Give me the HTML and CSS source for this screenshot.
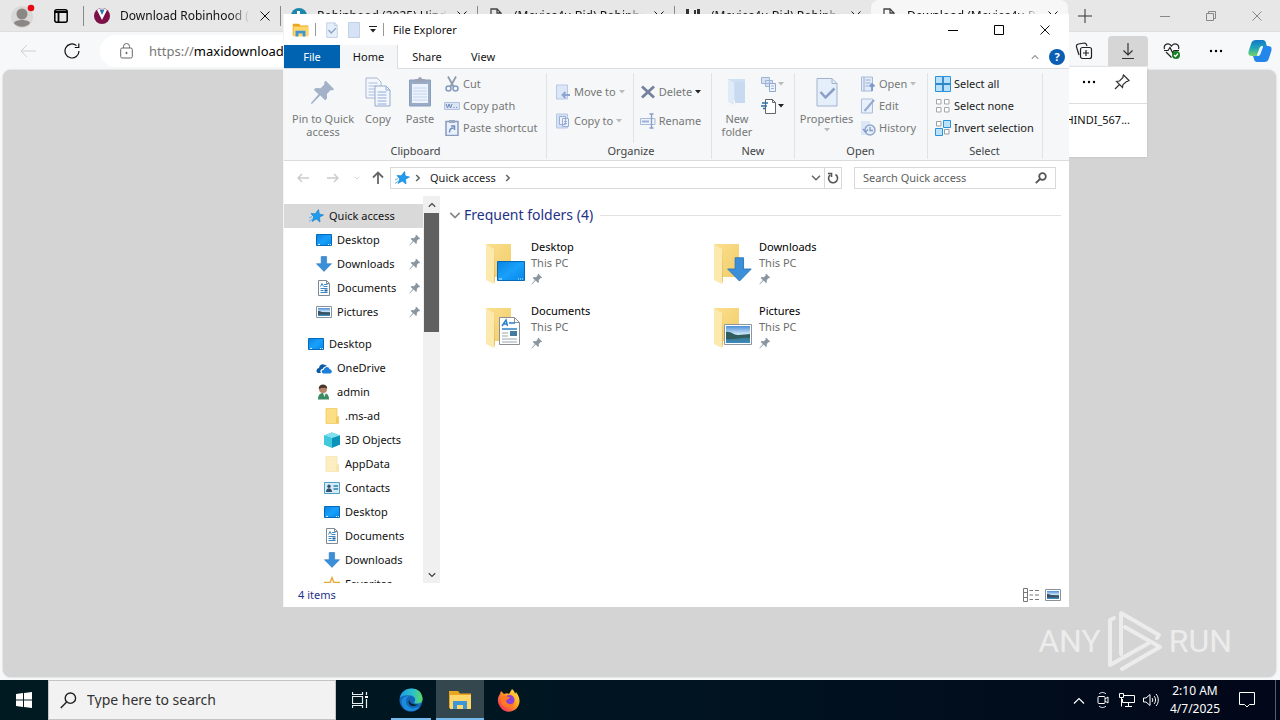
FILE: index.html
```html
<!DOCTYPE html>
<html lang="en">
<head>
  <meta charset="UTF-8" />
  <meta name="viewport" content="width=device-width, initial-scale=1.0"/>
  <title>File Explorer</title>
  <link rel="stylesheet" href="styles.css">
</head>
<body>
  <!-- shared icons -->
  <svg class="sprite" aria-hidden="true">
    <defs>
      <linearGradient id="gBlue" x1="0" y1="0" x2="1" y2="1"><stop offset="0" stop-color="#0a84e0"/><stop offset=".5" stop-color="#18a0fb"/><stop offset="1" stop-color="#0787e8"/></linearGradient>
      <linearGradient id="gSky" x1="0" y1="0" x2="0" y2="1"><stop offset="0" stop-color="#4c8fd8"/><stop offset=".5" stop-color="#d6ecfa"/><stop offset=".55" stop-color="#3f6f74"/><stop offset="1" stop-color="#3a8cc0"/></linearGradient>
      <linearGradient id="gFold" x1="0" y1="0" x2="1" y2="1"><stop offset="0" stop-color="#fbdf8d"/><stop offset="1" stop-color="#f1cd6b"/></linearGradient>
      <linearGradient id="gEdge" x1="0" y1="0" x2="1" y2="0"><stop offset="0" stop-color="#1b9de2"/><stop offset=".6" stop-color="#2fc2c8"/><stop offset="1" stop-color="#5fd95f"/></linearGradient>
      <linearGradient id="gFox" x1="1" y1="0" x2="0" y2="1"><stop offset="0" stop-color="#fff44f"/><stop offset=".45" stop-color="#ff9a1f"/><stop offset="1" stop-color="#f5156c"/></linearGradient>
      <linearGradient id="gCop" x1="0" y1="0" x2="0" y2="1"><stop offset="0" stop-color="#1577c9"/><stop offset=".5" stop-color="#1fa5b8"/><stop offset="1" stop-color="#74d36a"/></linearGradient>
    </defs>
    <symbol id="x" viewBox="0 0 10 10"><path d="M0.5 0.5l9 9M9.5 0.5l-9 9" fill="none" stroke="currentColor"/></symbol>
    <symbol id="caret" viewBox="0 0 6 4"><path d="M0 0h6L3 3.5z" fill="currentColor"/></symbol>
    <symbol id="chev-down" viewBox="0 0 10 6"><path d="M1 .8l4 4 4-4" fill="none" stroke="currentColor" stroke-width="1.5"/></symbol>
    <symbol id="chev-up" viewBox="0 0 10 6"><path d="M1 5.2l4-4 4 4" fill="none" stroke="currentColor" stroke-width="1.5"/></symbol>
    <symbol id="chev-right" viewBox="0 0 6 8"><path d="M1.2 1l3 3-3 3" fill="none" stroke="currentColor" stroke-width="1.6"/></symbol>
    <symbol id="page" viewBox="0 0 14 16"><path d="M2 1h6l4 4v10H2zM8 1v4h4" fill="none" stroke="#444" stroke-width="1.3"/></symbol>
    <symbol id="pin" viewBox="0 0 12 12"><path d="M7.3 0.8l3.9 3.9-1 .6-.6-.2-1.8 1.8.1 2.1-.9.9-2.3-2.3L.8 11.6l-.5-.4 3.600-4.100L1.700 5l.9-.9 2.300.1 1.800-1.800-.2-.8z" fill="currentColor"/></symbol>
    <symbol id="star" viewBox="0 0 16 16"><path d="M10.500 1.500l.8 4.500 4.200 1-4 2.300.5 4.700-3.700-3-4.300 2.500 1.800-4.600L3 5.500l4.300.3z" fill="#1f9bef" stroke="#0d78c8" stroke-width=".6"/><path d="M1 13.500l3.500-2.500M1 10l3-1.500" stroke="#5bb4f0"/></symbol>
    <symbol id="desktop" viewBox="0 0 16 16"><path d="M.5 2.500h15v11H.5z" fill="url(#gBlue)" stroke="#0669b8"/><path d="M2 12.500h2M12 12.500h1M14 12.500h1" stroke="#d8efff"/></symbol>
    <symbol id="down" viewBox="0 0 16 16"><path d="M5.200 0.500h5.400v7.200h4.900L8 15.400.4 7.700h4.800z" fill="#3b8fd9" stroke="#2c78bd" stroke-width=".6"/></symbol>
    <symbol id="doc" viewBox="0 0 16 16"><path d="M2.500.500h8l3 3v12h-11z" fill="#fff" stroke="#7f8a92"/><path d="M10.500.500v3h3" fill="none" stroke="#7f8a92"/><path d="M4.500 6.500l1.500-3 1.500 3M8 4.500h3.500M8 6.500h3.500M4.500 8.500h7M4.500 10.500h3M4.500 12.500h7" fill="none" stroke="#3b87c8"/><path d="M8.500 10.500h3" stroke="#1f5f9e" stroke-width="2"/></symbol>
    <symbol id="pic" viewBox="0 0 16 16"><path d="M.5 2.500h15v11H.5z" fill="#fff" stroke="#8a9299"/><path d="M2 4h12v8H2z" fill="url(#gSky)"/><path d="M2 7c3 0 5 2 12 2v1.500H2z" fill="#3b4f64"/></symbol>
    <symbol id="cloud" viewBox="0 0 16 16"><path d="M1 12.500C-.5 10 1.500 8 3 8c.3-3 3.500-5 6-3 1 .2 2 1 2 1-3 .2-4 2-4.500 3C4 9 4 12 5 13H2z" fill="#0c59a4"/><path d="M7 13.500c-2-1-1.500-3.800.8-3.800C8.500 6.500 13 6 13.500 9.300c3 .3 3 4 .5 4.200z" fill="#1a7fdb"/></symbol>
    <symbol id="user" viewBox="0 0 16 16"><circle cx="7" cy="5" r="4" fill="#b98468"/><path d="M2.800 5C2-1 11.500-1 11.200 4.500c-2-1-5-1-8.400.5z" fill="#4a372e"/><path d="M2 15.500c0-4 1.500-6.500 5.500-6.500s5.500 2.500 5.500 6.500z" fill="#3c8a62"/><path d="M7 9l1.500 4L10 9z" fill="#eee"/></symbol>
    <symbol id="folder" viewBox="0 0 16 16"><path d="M2 .5h11v8h1.500v7H2z" fill="#fcdf84" stroke="#eec35a" stroke-width=".7"/><path d="M12 9h2.500v6.300H12z" fill="#f3cb5c"/></symbol>
    <symbol id="cube" viewBox="0 0 16 16"><path d="M8 .5l8 3v9l-8 3.200-8-3.200v-9z" fill="#22b1cf"/><path d="M8 .5l8 3-8 2.800-8-2.800z" fill="#7fe0ee"/><path d="M8 6.300v9.400l-8-3.200v-9z" fill="#41c8dd"/><path d="M8 6.300l8-2.800v9l-8 3.200z" fill="#0c93b8"/></symbol>
    <symbol id="contact" viewBox="0 0 16 16"><path d="M.5 2.500h15v11H.5z" fill="#d5ecf6" stroke="#4ba2c6"/><circle cx="5" cy="6.300" r="1.700" fill="#34516b"/><path d="M2 12c0-5 6-5 6 0z" fill="#34516b"/><path d="M9.500 6h4.500M9.500 9h4.500" stroke="#2f7ba8" stroke-width="1.300"/></symbol>
    <symbol id="fav" viewBox="0 0 16 16"><path d="M8 1.500l2 5h5.500l-4.500 3 2 5.500-5-3.500L3 15l2-5.500-4.500-3H6z" fill="#fff3cf" stroke="#e5a93c" stroke-width="1.300"/></symbol>
    <symbol id="bigfolder" viewBox="0 0 40 48"><path d="M1 4h25v33H1z" fill="url(#gFold)"/><path d="M1 4l8 5v35L1 40z" fill="#fce9ae"/><path d="M9 9l1 31-1 4z" fill="#e5be61"/></symbol>
    <symbol id="explorer" viewBox="0 0 24 22"><path d="M1 2h9l2 2.500h11V19H1z" fill="#eaa620"/><path d="M2 6h21v14H2z" fill="#ffd669"/><path d="M5 20v-8h14v8h-4v-4H9v4z" fill="#3f96d4"/></symbol>
    <symbol id="loupe" viewBox="0 0 18 18"><circle cx="11" cy="6.500" r="5.500" fill="none" stroke="currentColor" stroke-width="1.500"/><path d="M7 10.500L.8 17" stroke="currentColor" stroke-width="1.500"/></symbol>
    <symbol id="copypage" viewBox="0 0 26 30"><path d="M1 1h11l4 4v16H1z" fill="#f4f7fc" stroke="#a9b8d0"/><path d="M3.500 6h9M3.500 9h9M3.500 12h9M3.500 15h9M3.500 18h9" stroke="#a9bde0"/><path d="M10 9h11l4 4v16H10z" fill="#f4f7fc" stroke="#94a9cb"/><path d="M21 9v4h4M12.500 15h9M12.500 18h9M12.500 21h9M12.500 24h9M12.500 27h9" stroke="#8fabd9" fill="none"/></symbol>
    <symbol id="clip" viewBox="0 0 24 30"><path d="M1.500 3h21v26h-21z" fill="#9aabc8" stroke="#899dbc"/><path d="M4 7h16v19H4z" fill="#edf3fc"/><path d="M7 5V2h3c0-2.500 4-2.500 4 0h3v3z" fill="#9aa4b4"/><path d="M5 11h14M5 14h14M5 17h14M5 20h14M5 23h14" stroke="#c4d4ee"/></symbol>
    <symbol id="cut" viewBox="0 0 16 16"><path d="M4 .5l5.500 10M12 .5l-5.500 10" stroke="#8f9cac" stroke-width="1.800"/><circle cx="4.500" cy="12.500" r="2.500" fill="none" stroke="#859bc2" stroke-width="1.500"/><circle cx="11.500" cy="12.500" r="2.500" fill="none" stroke="#859bc2" stroke-width="1.500"/></symbol>
    <symbol id="path" viewBox="0 0 16 16"><path d="M.5 4.500h15v7H.5z" fill="#d9e4f5" stroke="#b2c3de"/><path d="M2 6l1.500 4L5 6l1.500 4L8 6M9.500 9.500h1M12 9.500h1" fill="none" stroke="#7088b4"/></symbol>
    <symbol id="shortcut" viewBox="0 0 16 16"><path d="M2 1.500h12v14H2z" fill="#eaf1fb" stroke="#879bc0" stroke-width="1.500"/><path d="M5 0h6v3H5z" fill="#9aa9c0"/><path d="M5.500 12.500c0-3 1-4.500 4-4.500M7 6h3.500v4" fill="none" stroke="#6f8cc0" stroke-width="1.500"/></symbol>
    <symbol id="moveto" viewBox="0 0 16 16"><path d="M1.500 1h11v14h-11z" fill="#dce6f6" stroke="#b7c8e4"/><path d="M15 11H8M10.500 8L7.500 11l3 3" fill="none" stroke="#8ca4d0" stroke-width="1.800"/></symbol>
    <symbol id="copyto" viewBox="0 0 16 16"><path d="M1.500 1h11v14h-11z" fill="#d5e1f5" stroke="#b7c8e4"/><path d="M4.500 3.500h6v8h-6zM7.500 5.500h6v8h-6z" fill="#eef3fb" stroke="#98add3"/><path d="M9 8.500h3M9 10.500h3" stroke="#98add3"/></symbol>
    <symbol id="delete" viewBox="0 0 16 16"><path d="M2 2.500l12 11M14 2.500l-12 11" stroke="#74839b" stroke-width="2.800"/></symbol>
    <symbol id="rename" viewBox="0 0 16 16"><path d="M.5 5.500h14.500v6H.5z" fill="#eef3fb" stroke="#a9bbdb"/><path d="M2 7.500h7v2H2z" fill="#9db1d8"/><path d="M9.500 1h4M9.500 15h4M11.500 1v14" stroke="#879dc5" stroke-width="1.300"/></symbol>
    <symbol id="newfolder" viewBox="0 0 24 30"><path d="M3 2h17v21H3z" fill="#cfe0f2"/><path d="M3 2l6 4v22l-6-3z" fill="#e0ebf8"/><path d="M10 5h10v21H10z" fill="#c7daef"/></symbol>
    <symbol id="newitem" viewBox="0 0 16 16"><path d="M.5 1.500h8v6h-8zM4.500 4.500h7v6h-7z" fill="#d5e2f6" stroke="#a0b3d5"/><path d="M8.500 7.500h6v8h-6z" fill="#eef3fb" stroke="#90a7d0"/><path d="M10 10h3M10 12.500h3" stroke="#a0b3d5"/></symbol>
    <symbol id="easy" viewBox="0 0 16 16"><path d="M4.500 1.500h7l3 3v11h-10z" fill="#fff" stroke="#666"/><path d="M11.500 1.500v3h3" fill="none" stroke="#666"/><path d="M1 5h6M0 8h6M2 10.500h3" stroke="#2d6fa9" stroke-width="1.300"/></symbol>
    <symbol id="props" viewBox="0 0 22 30"><path d="M1 1.500h15l5 5V29H1z" fill="#e5eefb" stroke="#a4b3cd"/><path d="M16 1.500v5h5" fill="none" stroke="#a4b3cd"/><path d="M4.500 15l5 5.500 9-9" fill="none" stroke="#8b9fc5" stroke-width="2.500"/></symbol>
    <symbol id="open" viewBox="0 0 16 16"><path d="M1.500 1h11v14h-11z" fill="#e2ebf8" stroke="#a9bad8"/><path d="M4 1v14M5.500 4h5M5.500 7h5M5.500 10h3" stroke="#9aaed3"/><path d="M12 15V8M9.500 10.500L12 8l2.500 2.500" fill="none" stroke="#7f98c9" stroke-width="1.800"/></symbol>
    <symbol id="edit" viewBox="0 0 16 16"><path d="M1.500 1h11v14h-11z" fill="#e8f0fb" stroke="#adbeda"/><path d="M4.500 13l9.500-11" stroke="#94a8d0" stroke-width="2"/></symbol>
    <symbol id="history" viewBox="0 0 16 16"><path d="M1 1h9v14H1z" fill="#dce7f6"/><circle cx="10" cy="10" r="5" fill="#e5edf9" stroke="#92a7cf" stroke-width="1.500"/><path d="M10 7v3.500h3M3 9l2.500 3L8 9.500" fill="none" stroke="#8199c7" stroke-width="1.300"/></symbol>
    <symbol id="selall" viewBox="0 0 16 16"><path d="M.5.500h15v15H.5z" fill="#b7e0fb" stroke="#2e93d6"/><path d="M8 1v14M1 8h14" stroke="#2e86c6" stroke-width="1.800"/></symbol>
    <symbol id="selnone" viewBox="0 0 16 16"><path d="M1.500 1.500h4.500V6H1.500zM9.500 1.500H14V6H9.500zM1.500 9.500h4.500V14H1.500zM9.500 9.500H14V14H9.500z" fill="#fff" stroke="#a3a7ab"/></symbol>
    <symbol id="selinv" viewBox="0 0 16 16"><path d="M1.500 1.500h4.500V6H1.500zM9.500 9.500H14V14H9.500z" fill="#fff" stroke="#999da1"/><path d="M8.500.500h7v7h-7zM.5 8.500h7v7h-7z" fill="#b9e2fc" stroke="#2e93d6"/></symbol>
    <symbol id="dots" viewBox="0 0 14 4"><circle cx="2" cy="2" r="1.200"/><circle cx="7" cy="2" r="1.200"/><circle cx="12" cy="2" r="1.200"/></symbol>
  </svg>

  <main class="screen">
    <section class="browser" aria-label="Browser">
      <div class="tabstrip">
        <button class="profile" aria-label="Profile">
          <svg width="26" height="26" viewBox="0 0 26 26"><circle cx="12" cy="14" r="11" fill="#d8d8d8"/><circle cx="12" cy="11" r="5.500" fill="#8b8785"/><path d="M4 20c1-4 15-4 16 0-3 5-13 5-16 0z" fill="#8b8785"/><circle cx="21" cy="5" r="3.300" fill="#e50914"/></svg>
        </button>
        <button class="tab-menu" aria-label="Tab actions">
          <svg width="14" height="14" viewBox="0 0 14 14"><rect x=".8" y=".8" width="12.400" height="12.400" rx="2" fill="none" stroke="#000" stroke-width="1.500"/><path d="M1 3h12M4.500 3v10" stroke="#000" stroke-width="1.800"/></svg>
        </button>
        <div class="tab">
          <svg width="16" height="16" viewBox="0 0 16 16"><circle cx="8" cy="8" r="8" fill="#7b1146"/><path d="M3 2l5 10 5-10c-3-2.500-7-2.500-10 0z" fill="#fff"/><path d="M5.500 1.500h5L8 7z" fill="#257ca8"/></svg>
          <span class="tab-text">Download Robinhood (2025)</span>
          <button aria-label="Close tab"><svg width="10" height="10"><use href="#x"/></svg></button>
        </div>
        <div class="tab">
          <svg width="16" height="16" viewBox="0 0 16 16"><circle cx="8" cy="8" r="8" fill="#1c87ad"/><path d="M6 3h3v8H6z" fill="#fff"/></svg>
          <span class="tab-text">Robinhood (2025) Hindi Mov</span>
          <button aria-label="Close tab"><svg width="10" height="10"><use href="#x"/></svg></button>
        </div>
        <div class="tab">
          <svg width="16" height="16"><use href="#page"/></svg>
          <span class="tab-text">(Movies4u.Bid).Robinhood</span>
          <button aria-label="Close tab"><svg width="10" height="10"><use href="#x"/></svg></button>
        </div>
        <div class="tab">
          <svg width="16" height="16" viewBox="0 0 16 16"><path d="M1 1h14v14H1z" fill="#333"/><path d="M4 1h8v6H4z" fill="#eee"/><path d="M9 2h2v4H9z" fill="#333"/></svg>
          <span class="tab-text">(Movies4u.Bid).Robinhood</span>
          <button aria-label="Close tab"><svg width="10" height="10"><use href="#x"/></svg></button>
        </div>
        <div class="tab active">
          <svg width="16" height="16"><use href="#page"/></svg>
          <span class="tab-text">Download (Movies4u.Bid)</span>
          <button aria-label="Close tab"><svg width="10" height="10"><use href="#x"/></svg></button>
        </div>
        <button class="new-tab" aria-label="New tab"><svg width="14" height="14"><path d="M7 0v14M0 7h14" stroke="#333"/></svg></button>
        <div class="browser-controls">
          <button aria-label="Minimize"><svg width="10" height="10"><path d="M0 5.500h10" stroke="#888"/></svg></button>
          <button aria-label="Restore"><svg width="10" height="10" fill="none" stroke="#888"><path d="M.5 2.500h7v7h-7zM2.500 2V.500h7v7H8"/></svg></button>
          <button aria-label="Close"><svg width="10" height="10"><use href="#x"/></svg></button>
        </div>
      </div>
      <div class="toolbar">
        <button class="back" aria-label="Back"><svg width="16" height="14" fill="none" stroke="#d0d0d0"><path d="M16 7H1M7 1L1 7l6 6"/></svg></button>
        <button class="reload" aria-label="Reload"><svg width="16" height="16" viewBox="0 0 16 16" fill="none" stroke="#111" stroke-width="1.200"><path d="M15 8a7 7 0 1 1-2.500-5.400M14.800.5v4h-4"/></svg></button>
        <label class="url">
          <svg width="13" height="16" viewBox="0 0 13 16" fill="none" stroke="#666"><rect x=".7" y="5" width="11.600" height="10" rx="1.500"/><path d="M3.500 5V3.500a3 3 0 0 1 6 0V5"/><circle cx="6.500" cy="10" r=".7" fill="#444"/></svg>
          <span>https://</span><input type="text" value="maxidownload" aria-label="Address">
        </label>
        <div class="toolbar-icons">
          <button aria-label="Collections"><svg width="18" height="18" viewBox="0 0 18 18" fill="none" stroke="#222" stroke-width="1.200"><path d="M4 13L1.500 5c-.5-2 0-2.500 2-3l6-1c1.500 0 2 1 2.500 3"/><rect x="5.500" y="5.500" width="11" height="11" rx="2"/><path d="M11 8v6M8 11h6"/></svg></button>
          <button class="pressed" aria-label="Downloads"><svg width="14" height="18" viewBox="0 0 14 18" fill="none" stroke="#333" stroke-width="1.200"><path d="M7 1v12M2.500 8.500L7 13l4.500-4.500M1 16.500h12"/></svg></button>
          <button aria-label="Browser essentials"><svg width="18" height="18" viewBox="0 0 18 18" fill="none" stroke="#222" stroke-width="1.200"><path d="M1.500 7C0 2 6 0 8.500 4 11 0 17 2 15.500 7M3 10l5.500 5.500M1 8.500h4l2-3 2.500 5L11 8.500h5"/><circle cx="13" cy="13" r="4" fill="#158021" stroke="none"/><path d="M11 13l1.500 1.500L15 11.500" stroke="#fff"/></svg></button>
          <button aria-label="Settings"><svg width="14" height="4"><use href="#dots"/></svg></button>
          <button aria-label="Copilot"><svg width="24" height="24" viewBox="0 0 24 24"><path d="M8 1h7c3 0 3 4 4 6h-5c-2 0-2 2-3 5l-2 5H4c-4 0-4-3-3-6l2-6c1-3 2-4 5-4z" fill="url(#gCop)"/><path d="M16 23H9c-3 0-3-4-4-6h5c2 0 2-2 3-5l2-5h5c4 0 4 3 3 6l-2 6c-1 3-2 4-5 4z" fill="#2386ea"/><path d="M12 8h3l-3 8H9z" fill="#eef7ff"/></svg></button>
        </div>
      </div>
      <div class="viewport"></div>
    </section>

    <aside class="downloads" aria-label="Downloads">
      <div class="downloads-head">
        <button aria-label="More"><svg width="14" height="4"><use href="#dots"/></svg></button>
        <button aria-label="Pin"><svg width="16" height="16" viewBox="0 0 16 16" fill="none" stroke="#333" stroke-width="1.200"><path d="M9.500 1l5.500 5.500-1.500 1-1 0L9 10.500l-.5 3L2.500 7.500l3-.5L9 3.500V2zM5.500 10.500L1 15"/></svg></button>
      </div>
      <p class="download-name">HINDI_567...</p>
    </aside>

    <section class="explorer" aria-label="File Explorer">
      <header class="titlebar">
        <svg width="17" height="16"><use href="#explorer"/></svg>
        <i class="bar"></i>
        <button aria-label="Properties"><svg width="12" height="16"><use href="#props"/></svg></button>
        <button aria-label="New folder"><svg width="12" height="16" viewBox="0 0 12 16"><path d="M.5.500h11v15H.5z" fill="#d6e3f5" stroke="#c1d0e6"/></svg></button>
        <button class="customize" aria-label="Customize"><svg width="8" height="7" viewBox="0 0 8 7"><path d="M0 .5h8" stroke="#222"/><path d="M1 3h6L4 6.500z" fill="#222"/></svg></button>
        <i class="bar"></i>
        <h1>File Explorer</h1>
        <div class="win-controls">
          <button aria-label="Minimize"><svg width="10" height="10"><path d="M0 5.500h10" stroke="#000"/></svg></button>
          <button aria-label="Maximize"><svg width="10" height="10"><path d="M.5.500h9v9h-9z" fill="none" stroke="#000"/></svg></button>
          <button aria-label="Close"><svg width="10" height="10"><use href="#x"/></svg></button>
        </div>
      </header>

      <nav class="ribbon-tabs">
        <button class="file">File</button>
        <button class="current">Home</button>
        <button>Share</button>
        <button>View</button>
        <div class="ribbon-help">
          <button aria-label="Collapse ribbon"><svg width="8" height="6" viewBox="0 0 10 6"><use href="#chev-up"/></svg></button>
          <button class="help" aria-label="Help">?</button>
        </div>
      </nav>

      <div class="ribbon">
        <div class="group clipboard">
          <div class="group-body">
            <button class="big wide"><svg width="26" height="30" viewBox="0 0 12 14"><path transform="translate(0 1)" d="M7.300.8l3.900 3.900-1 .6-.6-.2-1.800 1.800.1 2.100-.9.900-2.300-2.300L.8 11.600l-.5-.4 3.600-4.100L1.700 5l.9-.9 2.300.1 1.800-1.800-.2-.8z" fill="#a3b2c9"/></svg>Pin to Quick access</button>
            <button class="big"><svg width="26" height="30"><use href="#copypage"/></svg>Copy</button>
            <button class="big"><svg width="24" height="30"><use href="#clip"/></svg>Paste</button>
            <div class="stack">
              <button><svg width="16" height="16"><use href="#cut"/></svg>Cut</button>
              <button><svg width="16" height="16"><use href="#path"/></svg>Copy path</button>
              <button><svg width="16" height="16"><use href="#shortcut"/></svg>Paste shortcut</button>
            </div>
          </div>
          <span class="group-name">Clipboard</span>
        </div>
        <div class="group organize">
          <div class="group-body">
            <div class="stack loose">
              <button><svg width="16" height="16"><use href="#moveto"/></svg>Move to<svg class="caret" width="6" height="4"><use href="#caret"/></svg></button>
              <button><svg width="16" height="16"><use href="#copyto"/></svg>Copy to<svg class="caret" width="6" height="4"><use href="#caret"/></svg></button>
            </div>
            <div class="stack loose divided">
              <button><svg width="16" height="16"><use href="#delete"/></svg>Delete<svg class="caret dark" width="6" height="4"><use href="#caret"/></svg></button>
              <button><svg width="16" height="16"><use href="#rename"/></svg>Rename</button>
            </div>
          </div>
          <span class="group-name">Organize</span>
        </div>
        <div class="group new">
          <div class="group-body">
            <button class="big"><svg width="24" height="30"><use href="#newfolder"/></svg>New folder</button>
            <div class="stack">
              <button aria-label="New item"><svg width="16" height="16"><use href="#newitem"/></svg><svg class="caret" width="6" height="4"><use href="#caret"/></svg></button>
              <button aria-label="Easy access"><svg width="16" height="16"><use href="#easy"/></svg><svg class="caret dark" width="6" height="4"><use href="#caret"/></svg></button>
            </div>
          </div>
          <span class="group-name">New</span>
        </div>
        <div class="group open">
          <div class="group-body">
            <button class="big"><svg width="22" height="30"><use href="#props"/></svg>Properties<svg class="caret" width="6" height="4"><use href="#caret"/></svg></button>
            <div class="stack">
              <button><svg width="16" height="16"><use href="#open"/></svg>Open<svg class="caret" width="6" height="4"><use href="#caret"/></svg></button>
              <button><svg width="16" height="16"><use href="#edit"/></svg>Edit</button>
              <button><svg width="16" height="16"><use href="#history"/></svg>History</button>
            </div>
          </div>
          <span class="group-name">Open</span>
        </div>
        <div class="group select">
          <div class="group-body">
            <div class="stack enabled">
              <button><svg width="16" height="16"><use href="#selall"/></svg>Select all</button>
              <button><svg width="16" height="16"><use href="#selnone"/></svg>Select none</button>
              <button><svg width="16" height="16"><use href="#selinv"/></svg>Invert selection</button>
            </div>
          </div>
          <span class="group-name">Select</span>
        </div>
      </div>

      <div class="navbar">
        <div class="nav-buttons">
          <button class="dim" aria-label="Back"><svg width="12" height="10" fill="none" stroke="currentColor" stroke-width="1.500"><path d="M12 5H1M5 1L1 5l4 4"/></svg></button>
          <button class="dim" aria-label="Forward"><svg width="12" height="10" fill="none" stroke="currentColor" stroke-width="1.500"><path d="M0 5h11M7 1l4 4-4 4"/></svg></button>
          <button class="dim recent" aria-label="Recent locations"><svg width="6" height="4" viewBox="0 0 10 6"><use href="#chev-down"/></svg></button>
          <button aria-label="Up"><svg width="12" height="13" fill="none" stroke="currentColor" stroke-width="1.800"><path d="M6 13V1.500M1 6.500l5-5 5 5"/></svg></button>
        </div>
        <div class="address">
          <svg width="16" height="16"><use href="#star"/></svg>
          <svg width="6" height="8"><use href="#chev-right"/></svg>
          <button>Quick access</button>
          <svg width="6" height="8"><use href="#chev-right"/></svg>
          <button class="history-drop" aria-label="Previous locations"><svg width="10" height="6"><use href="#chev-down"/></svg></button>
          <button class="refresh" aria-label="Refresh"><svg width="12" height="12" viewBox="0 0 12 12" fill="none" stroke="#555" stroke-width="1.600"><path d="M8.500 2.500A4.500 4.500 0 1 1 3 3M1 1.500h3.500V5"/></svg></button>
        </div>
        <label class="search">
          <input type="text" placeholder="Search Quick access" aria-label="Search Quick access">
          <svg width="12" height="12" viewBox="0 0 12 12" fill="none" stroke="#555" stroke-width="1.800"><circle cx="7.500" cy="4.500" r="3.300"/><path d="M5 7L.8 11.200"/></svg>
        </label>
      </div>

      <div class="panes">
        <nav class="tree">
          <a href="#" class="level-0 selected"><svg width="16" height="16"><use href="#star"/></svg>Quick access</a>
          <a href="#" class="level-1"><svg width="16" height="16"><use href="#desktop"/></svg>Desktop<svg class="pin" width="12" height="12"><use href="#pin"/></svg></a>
          <a href="#" class="level-1"><svg width="16" height="16"><use href="#down"/></svg>Downloads<svg class="pin" width="12" height="12"><use href="#pin"/></svg></a>
          <a href="#" class="level-1"><svg width="16" height="16"><use href="#doc"/></svg>Documents<svg class="pin" width="12" height="12"><use href="#pin"/></svg></a>
          <a href="#" class="level-1"><svg width="16" height="16"><use href="#pic"/></svg>Pictures<svg class="pin" width="12" height="12"><use href="#pin"/></svg></a>
          <a href="#" class="level-0 root"><svg width="16" height="16"><use href="#desktop"/></svg>Desktop</a>
          <a href="#" class="level-1"><svg width="16" height="16"><use href="#cloud"/></svg>OneDrive</a>
          <a href="#" class="level-1"><svg width="16" height="16"><use href="#user"/></svg>admin</a>
          <a href="#" class="level-2"><svg width="16" height="16"><use href="#folder"/></svg>.ms-ad</a>
          <a href="#" class="level-2"><svg width="16" height="16"><use href="#cube"/></svg>3D Objects</a>
          <a href="#" class="level-2"><svg class="faded" width="16" height="16"><use href="#folder"/></svg>AppData</a>
          <a href="#" class="level-2"><svg width="16" height="16"><use href="#contact"/></svg>Contacts</a>
          <a href="#" class="level-2"><svg width="16" height="16"><use href="#desktop"/></svg>Desktop</a>
          <a href="#" class="level-2"><svg width="16" height="16"><use href="#doc"/></svg>Documents</a>
          <a href="#" class="level-2"><svg width="16" height="16"><use href="#down"/></svg>Downloads</a>
          <a href="#" class="level-2"><svg width="16" height="16"><use href="#fav"/></svg>Favorites</a>
        </nav>
        <div class="scrollbar">
          <button aria-label="Scroll up"><svg width="8" height="6" viewBox="0 0 10 6"><use href="#chev-up"/></svg></button>
          <div class="thumb"></div>
          <button aria-label="Scroll down"><svg width="8" height="6" viewBox="0 0 10 6"><use href="#chev-down"/></svg></button>
        </div>
        <div class="content">
          <h2><svg width="12" height="7" viewBox="0 0 10 6"><use href="#chev-down"/></svg>Frequent folders (4)</h2>
          <div class="folders">
            <a href="#" class="folder">
              <svg width="40" height="48" viewBox="0 0 40 48"><use href="#bigfolder" width="40" height="48"/><path d="M12.500 21.500h27v19h-27z" fill="url(#gBlue)" stroke="#0669b8"/><path d="M14 39h3M33 39h1M35 39h1M37 39h1" stroke="#d8efff"/></svg>
              <span><b>Desktop</b>This PC<svg width="12" height="12"><use href="#pin"/></svg></span>
            </a>
            <a href="#" class="folder">
              <svg width="40" height="48" viewBox="0 0 40 48"><use href="#bigfolder" width="40" height="48"/><use href="#down" x="14" y="17" width="25" height="25"/></svg>
              <span><b>Downloads</b>This PC<svg width="12" height="12"><use href="#pin"/></svg></span>
            </a>
            <a href="#" class="folder">
              <svg width="40" height="48" viewBox="0 0 40 48"><use href="#bigfolder" width="40" height="48"/><path d="M14.500 13.500h15l5 5v22h-20z" fill="#fff" stroke="#8a8f94"/><path d="M29.500 13.500v5h5" fill="none" stroke="#8a8f94"/><path d="M17 22l4-6 1.500 6M18.500 20h3M24 19h6M17 25h15" fill="none" stroke="#2b80ca" stroke-width="1.500"/><path d="M17 29h6M17 32h6M17 35h15M17 38h15" stroke="#9aa4ac"/><path d="M25 27h7v5h-7z" fill="#46799e"/></svg>
              <span><b>Documents</b>This PC<svg width="12" height="12"><use href="#pin"/></svg></span>
            </a>
            <a href="#" class="folder">
              <svg width="40" height="48" viewBox="0 0 40 48"><use href="#bigfolder" width="40" height="48"/><path d="M11.500 20.500h27v20h-27z" fill="#fff" stroke="#8e969d"/><path d="M13 22h24v17H13z" fill="url(#gSky)"/><path d="M13 28c5-1 7 3 12 3l12-1v4c-8-1-16 2-24 1z" fill="#315d5e"/></svg>
              <span><b>Pictures</b>This PC<svg width="12" height="12"><use href="#pin"/></svg></span>
            </a>
          </div>
        </div>
      </div>

      <footer class="status">
        <span>4 items</span>
        <button aria-label="Details view"><svg width="16" height="14" viewBox="0 0 16 14" fill="none" stroke="#777"><path d="M.5.500h4v13h-4zM1 4.500h3M1 9.500h3M6.500 2.500H10M12 2.500h4M6.500 7H10M12 7h4M6.500 11.500H10M12 11.500h4"/></svg></button>
        <button aria-label="Large icons view"><svg width="16" height="16"><use href="#pic"/></svg></button>
      </footer>
    </section>

    <div class="watermark">
      <span>ANY</span>
      <svg width="56" height="62" viewBox="0 0 56 62" fill="none" stroke="#ececec" stroke-width="4" stroke-linejoin="round" stroke-linecap="round"><path d="M7 8L3 10v45l39-22M14 44V3l38 22-2 3M18 17l35 20-38 22"/></svg>
      <span>RUN</span>
    </div>

    <footer class="taskbar">
      <button class="start" aria-label="Start"><svg width="16" height="16" viewBox="0 0 16 16" fill="#fff"><path d="M0 2l7-1v6.500H0zM8 .9L16 0v7.500H8zM0 8.500h7V15l-7-1zM8 8.500h8V16l-8-.9z"/></svg></button>
      <label class="task-search">
        <svg width="17" height="17" viewBox="0 0 18 18"><use href="#loupe"/></svg>
        <input type="text" placeholder="Type here to search" aria-label="Type here to search">
      </label>
      <button class="task task-view" aria-label="Task view"><svg width="16" height="16" viewBox="0 0 16 16" fill="none" stroke="#e8eef0" stroke-width="1.200"><path d="M.5 0v2.500h10V0M.5 16v-2.500h10V16M.5 4.500h10v7H.5zM14.500 0v3M14.500 7v9"/><path d="M13 4h3v2h-3z" fill="#fff" stroke="none"/></svg></button>
      <button class="task running" aria-label="Edge"><svg width="24" height="24" viewBox="0 0 24 24"><circle cx="12" cy="12" r="11.500" fill="#1466b8"/><path d="M1 10C3-2 22-3 23.500 10c.5 5-4 6.500-8.500 5 3-4 0-8-5-7.500C6 7 3 8 1 10z" fill="url(#gEdge)"/><path d="M10 8c-4 2-4 8 0 11 4 2.500 8 1 11-1-3 6-12 7-16 2-5-6-2-12 5-12z" fill="#1b8bdc"/><path d="M10.500 11c-1 3 2 6 8 5.500-5 4-11 0-8-5.500z" fill="#04222d"/></svg></button>
      <button class="task running focused" aria-label="File Explorer"><svg width="24" height="22"><use href="#explorer"/></svg></button>
      <button class="task" aria-label="Firefox"><svg width="24" height="24" viewBox="0 0 24 24"><path d="M3 6l1-3 3 3c2-1 4-1 5 0l3-5c2 2 3 3 3 5l1-2c4 5 5 11 1 16-5 5-12 5-16 0C0 15 0 10 3 6z" fill="url(#gFox)"/><circle cx="12.500" cy="12" r="5" fill="#8a3fd6"/><path d="M4 9c4-3 6 0 9 0-1 3-4 2-4 4 1 4 6 4 9 1-2 7-12 7-14 0z" fill="#ff7a22"/></svg></button>
      <div class="tray">
        <button aria-label="Show hidden icons"><svg width="12" height="7" fill="none" stroke="#fff" stroke-width="1.200"><path d="M1 6.500l5-5 5 5"/></svg></button>
        <button aria-label="Meet now"><svg width="12" height="16" viewBox="0 0 12 16" fill="none" stroke="#fff"><rect x="1" y="4.500" width="7" height="7" rx="1"/><path d="M8 7l3-2v6L8 9M2 2c2-2 5-2 7 0M2 14c2 2 5 2 7 0"/></svg></button>
        <button aria-label="Network"><svg width="16" height="14" viewBox="0 0 16 14" fill="none" stroke="#fff"><path d="M5 2.500h10.500v7h-12V6M9.500 10v3M6 13.500h7M.5.500h4v4h-4zM2.500 5v8.500"/></svg></button>
        <button aria-label="Volume"><svg width="16" height="14" viewBox="0 0 16 14" fill="none" stroke="#fff"><path d="M.5 5h2.500L7 1.500v11L3 9H.5zM9 5c1 1 1 3 0 4M11 3c2 2 2 6 0 8M13 1c3 3 3 9 0 12"/></svg></button>
        <div class="clock"><time>2:10 AM</time><time>4/7/2025</time></div>
        <button class="notify" aria-label="Notifications"><svg width="16" height="16" viewBox="0 0 16 16" fill="none" stroke="#fff"><path d="M.5.500h15v12h-5L8 15l-2.500-2.500h-5z"/></svg></button>
        <div class="show-desktop"></div>
      </div>
    </footer>
  </main>
</body>
</html>
```
FILE: styles.css
```css
* {
  box-sizing: border-box;
}

body {
  margin: 0;
  font-family: 'Noto Sans', 'Open Sans', sans-serif;
  font-size: 12px;
  line-height: 16px;
  color: #111;
}

h1, h2, p {
  margin: 0;
  font-size: 11px;
  font-weight: normal;
}

button {
  display: flex;
  align-items: center;
  justify-content: center;
  padding: 0;
  border: none;
  background: none;
  font: inherit;
  color: inherit;
}

input {
  min-width: 0;
  padding: 0;
  border: none;
  outline: none;
  background: none;
  font: inherit;
  color: inherit;
}

a {
  color: inherit;
  text-decoration: none;
}

svg {
  flex: none;
}

.sprite {
  position: absolute;
  width: 0;
  height: 0;
}

.screen {
  position: relative;
  display: flex;
  flex-direction: column;
  height: 100vh;
  overflow: hidden;
}

/* browser behind */
.browser {
  flex: 1;
  display: flex;
  flex-direction: column;
  background: #f7f8f9;
}

.tabstrip {
  display: flex;
  align-items: center;
  height: 32px;
  background: #e7e7e7;
  border-bottom: 1px solid #dedede;
}

.profile {
  width: 42px;
  padding-left: 4px;
}

.tab-menu {
  width: 41px;
  padding-right: 4px;
}

.tab {
  display: flex;
  align-items: center;
  gap: 10px;
  flex: 0 1 197px;
  min-width: 0;
  height: 20px;
  padding: 0 10px;
  border-left: 1px solid #888;
}

.tab.active {
  height: 32px;
  border: none;
  border-radius: 8px 8px 0 0;
  background: #f7f7f7;
}

.tab-text {
  flex: 1;
  overflow: hidden;
  white-space: nowrap;
  mask-image: linear-gradient(to right, #000 85%, transparent);
}

.new-tab {
  width: 34px;
}

.browser-controls {
  display: flex;
  margin-left: auto;
  color: #888;
}

.browser-controls button {
  width: 46px;
}

.toolbar {
  display: flex;
  align-items: center;
  height: 38px;
}

.back {
  width: 56px;
}

.reload {
  width: 32px;
}

.url {
  flex: 1;
  display: flex;
  align-items: center;
  height: 32px;
  margin-left: 12px;
  padding-left: 20px;
  border-radius: 16px;
  background: #fff;
  font-size: 13px;
  color: #777;
}

.url svg {
  margin-right: 16px;
}

.url input {
  flex: 1;
  color: #000;
}

.toolbar-icons {
  display: flex;
  gap: 4px;
}

.toolbar-icons button {
  width: 40px;
  height: 30px;
}

.toolbar-icons .pressed {
  border-radius: 4px 4px 0 0;
  background: #d6d6d6;
}

.viewport {
  flex: 1;
  margin: 0 4px 3px 3px;
  border-radius: 8px;
  background: #d4d4d4;
  box-shadow: 0 0 2px #bbb;
}

.downloads {
  position: absolute;
  top: 67px;
  right: 133px;
  width: 360px;
  height: 90px;
  background: #fff;
  box-shadow: 0 0 2px #bbb;
}

.downloads-head {
  display: flex;
  justify-content: flex-end;
  gap: 18px;
  height: 37px;
  padding: 0 17px 6px 0;
  border-bottom: 1px solid #ddd;
}

.download-name {
  padding: 8px 17px;
  text-align: right;
}

/* explorer window */
.explorer {
  position: absolute;
  top: 14px;
  right: 211px;
  bottom: 113px;
  left: 283px;
  display: flex;
  flex-direction: column;
  border-left: 1px solid #f4f4f4;
  background: #fff;
  font-size: 11px;
}

.titlebar {
  display: flex;
  align-items: center;
  height: 31px;
  padding: 0 1px 0 8px;
}

.titlebar .bar {
  width: 1px;
  height: 13px;
  margin: 0 9px 0 6px;
  background: #999;
}

.titlebar > button {
  width: 14px;
  margin-right: 8px;
}

.titlebar > .customize {
  width: 8px;
  margin-right: 0;
}

.win-controls {
  display: flex;
  margin-left: auto;
}

.win-controls button {
  width: 46px;
}

.ribbon-tabs {
  display: flex;
  height: 24px;
  border-bottom: 1px solid #dcdddf;
}

.ribbon-tabs > button {
  width: 56px;
  height: 24px;
}

.ribbon-tabs > .file {
  height: 23px;
  background: #0063b1;
  color: #fff;
}

.ribbon-tabs > .current {
  width: 58px;
  border-right: 1px solid #dcdddf;
  background: #f5f6f7;
  margin-right: 1px;
}

.ribbon-help {
  display: flex;
  align-items: center;
  gap: 10px;
  margin-left: auto;
  padding-right: 4px;
  color: #999;
}

.help {
  width: 16px;
  height: 16px;
  border-radius: 50%;
  background: #0a5fb4;
  color: #fff;
  font-weight: bold;
}

.ribbon {
  display: flex;
  height: 92px;
  border-bottom: 1px solid #dadbdc;
  background: #f5f7f9;
  color: #777;
}

.group {
  display: flex;
  flex-direction: column;
  margin: 4px 0 1px;
  border-right: 1px solid #e0e2e4;
}

.group-body {
  flex: 1;
  display: flex;
}

.group-name {
  text-align: center;
  color: #444;
}

.clipboard {
  width: 263px;
  padding-left: 5px;
}

.organize {
  width: 165px;
  padding-left: 8px;
}

.new {
  width: 83px;
  padding-left: 4px;
}

.open {
  width: 133px;
  padding-left: 3px;
}

.select {
  width: 115px;
  padding-left: 7px;
}

.clipboard .group-name,
.organize .group-name,
.new .group-name,
.open .group-name {
  padding-right: 4px;
}

.select .group-name {
  padding-right: 8px;
}

.big {
  flex-direction: column;
  justify-content: flex-start;
  width: 42px;
  padding-top: 4px;
  line-height: 13px;
}

.big > svg:first-child {
  margin-bottom: 5px;
}

.big.wide {
  width: 68px;
}

.open .big {
  width: 57px;
}

.open .big .caret {
  margin: 3px 0 0;
}

.stack {
  display: flex;
  flex-direction: column;
  align-items: flex-start;
  margin-left: 3px;
}

.stack button {
  gap: 3px;
  height: 22px;
  white-space: nowrap;
}

.open .stack {
  margin-left: 5px;
}

.stack.loose {
  gap: 7px;
  margin: 0;
  padding-top: 8px;
}

.new .stack button {
  gap: 1px;
}

.organize .divided {
  margin-left: 8px;
  padding-left: 6px;
  border-left: 1px solid #e0e2e4;
}

.select .stack {
  margin-left: 0;
  color: #222;
}

.caret {
  color: #bbb;
}

.caret.dark {
  color: #222;
}

.navbar {
  display: flex;
  align-items: center;
  height: 35px;
  padding: 0 13px 2px 0;
}

.nav-buttons {
  display: flex;
  padding-left: 4px;
  color: #666;
}

.nav-buttons button {
  width: 30px;
}

.nav-buttons .recent {
  width: 17px;
}

.nav-buttons button:last-child {
  width: 25px;
}

.nav-buttons .dim {
  color: #ccc;
}

.address {
  flex: 1;
  display: flex;
  align-items: center;
  gap: 9px;
  height: 22px;
  margin-right: 12px;
  padding-left: 3px;
  border: 1px solid #d9d9d9;
  color: #222;
}

.address > svg {
  color: #666;
}

.address > svg:first-child {
  margin-right: -4px;
}

.history-drop {
  margin-left: auto;
  color: #666;
}

.address .refresh {
  width: 17px;
  height: 20px;
  margin-left: -6px;
  border-left: 1px solid #d9d9d9;
}

.search {
  display: flex;
  align-items: center;
  width: 202px;
  height: 22px;
  padding: 0 8px;
  border: 1px solid #d9d9d9;
  color: #555;
}

.search input {
  flex: 1;
}

.search input::placeholder {
  color: #606060;
}

.panes {
  flex: 1;
  display: flex;
  min-height: 0;
}

.tree {
  width: 139px;
  padding-top: 8px;
  overflow: hidden;
}

.tree a {
  display: flex;
  align-items: center;
  gap: 5px;
  height: 24px;
}

.tree .level-0 {
  padding-left: 24px;
}

.tree .level-1 {
  padding-left: 32px;
}

.tree .level-2 {
  padding-left: 40px;
}

.tree .selected {
  background: #d9d9d9;
}

.tree .root {
  margin-top: 8px;
}

.tree .pin {
  margin: 0 2px 0 auto;
}

.pin {
  color: #8b959e;
}

.faded {
  opacity: 0.5;
}

.scrollbar {
  display: flex;
  flex-direction: column;
  width: 17px;
  padding: 0 1px;
  background: #f0f0f0;
  color: #444;
}

.scrollbar button {
  height: 17px;
}

.scrollbar button:last-child {
  margin-top: auto;
}

.thumb {
  height: 119px;
  background: #606060;
}

.content {
  flex: 1;
  padding: 8px 8px 0 9px;
}

.content h2 {
  display: flex;
  align-items: center;
  gap: 3px;
  height: 22px;
  font-size: 14px;
  color: #1e3287;
}

.content h2 svg {
  color: #888;
}

.content h2::after {
  content: '';
  flex: 1;
  height: 1px;
  margin-left: 4px;
  background: #e2e2e2;
}

.folders {
  display: grid;
  grid-template-columns: repeat(auto-fill, 228px);
  row-gap: 16px;
  padding: 14px 100px 0 36px;
}

.folder {
  display: flex;
  gap: 6px;
  height: 48px;
}

.folder span {
  display: flex;
  flex-direction: column;
  margin-top: -1px;
  color: #6d6d6d;
}

.folder b {
  font-weight: normal;
  color: #000;
}

.folder span svg {
  margin-top: 2px;
  color: #8b959e;
}

.status {
  display: flex;
  align-items: center;
  gap: 6px;
  height: 24px;
  padding: 0 8px 0 14px;
  color: #1e3287;
}

.status span {
  margin-right: auto;
}

.watermark {
  position: absolute;
  right: 48px;
  bottom: 48px;
  display: flex;
  align-items: center;
  gap: 6px;
  color: #ececec;
  font-family: Roboto, sans-serif;
  font-size: 32px;
  line-height: 62px;
}

/* taskbar */
.taskbar {
  display: flex;
  height: 40px;
  background: linear-gradient(to right, #001a22, #001521 50%, #020719);
  color: #fff;
}

.start {
  width: 48px;
}

.task-search {
  display: flex;
  align-items: center;
  gap: 10px;
  width: 288px;
  padding-left: 11px;
  border: 1px solid #c4c4c4;
  background: #f2f2f2;
  color: #222;
  font-size: 14px;
}

.task-search input {
  flex: 1;
}

.task-search input::placeholder {
  color: #333;
}

.task {
  width: 48px;
  margin-right: 1px;
}

.task-view {
  margin-right: 3px;
}

.running {
  background: linear-gradient(#76b9ed, #76b9ed) center bottom / 40px 2px no-repeat;
}

.focused {
  background: linear-gradient(#76b9ed, #76b9ed) center bottom / 48px 2px no-repeat, #34474f;
}

.tray {
  display: flex;
  align-items: center;
  margin-left: auto;
}

.tray button {
  width: 24px;
}

.clock {
  display: flex;
  flex-direction: column;
  width: 64px;
  line-height: 18px;
  text-align: center;
}

.tray .notify {
  width: 40px;
}

.show-desktop {
  width: 5px;
  height: 40px;
  margin-left: 8px;
  border-left: 1px solid #56606c;
}
```
